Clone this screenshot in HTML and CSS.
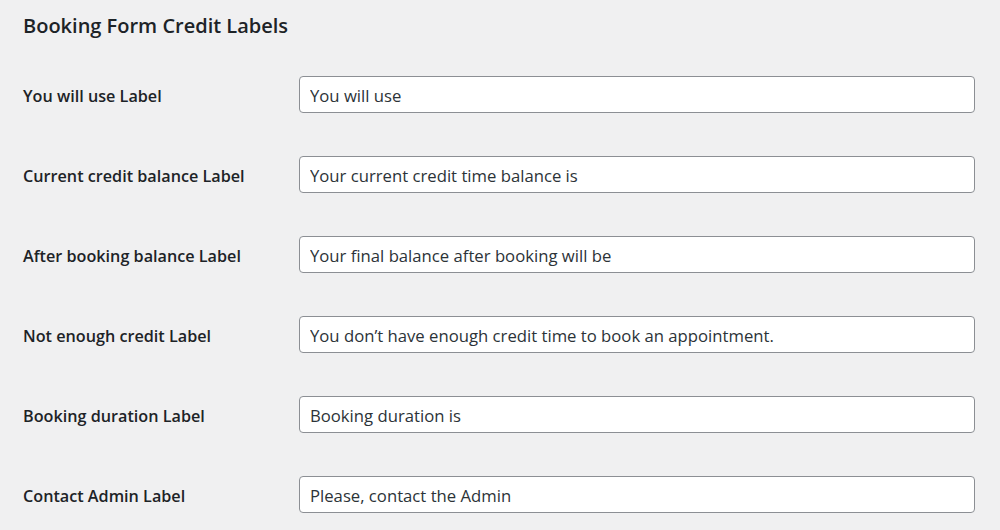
FILE: index.html
```html
<!DOCTYPE html>
<html>
<head>
<meta charset="utf-8">
<link rel="stylesheet" href="styles.css">
</head>
<body>
<div class="wrap">
  <h2 class="title">Booking Form Credit Labels</h2>
  <div class="form">
    <div class="row"><label class="lbl">You will use Label</label><input class="field" type="text" value="You will use"></div>
    <div class="row"><label class="lbl">Current credit balance Label</label><input class="field" type="text" value="Your current credit time balance is"></div>
    <div class="row"><label class="lbl">After booking balance Label</label><input class="field" type="text" value="Your final balance after booking will be"></div>
    <div class="row"><label class="lbl">Not enough credit Label</label><input class="field" type="text" value="You don’t have enough credit time to book an appointment."></div>
    <div class="row"><label class="lbl">Booking duration Label</label><input class="field" type="text" value="Booking duration is"></div>
    <div class="row"><label class="lbl">Contact Admin Label</label><input class="field" type="text" value="Please, contact the Admin"></div>
  </div>
</div>
</body>
</html>
```
FILE: styles.css
```css
html, body {
  margin: 0;
  padding: 0;
  background: #f0f0f1;
  color: #1d2327;
  font-family: "Open Sans", "Noto Sans", sans-serif;
}
.wrap {
  padding: 10px 25px 0 23px;
}
.title {
  margin: 0;
  font-size: 20px;
  font-weight: 600;
  line-height: 32px;
}
.form {
  display: flex;
  flex-direction: column;
  gap: 43px;
  margin-top: 34px;
}
.row {
  display: flex;
  align-items: center;
}
.lbl {
  width: 276px;
  flex: none;
  padding-top: 2px;
  font-size: 16.2px;
  font-weight: 600;
}
.field {
  flex: 1;
  box-sizing: border-box;
  height: 37px;
  border: 1px solid #8c8f94;
  border-radius: 4px;
  background: #fff;
  padding: 2px 10px 0;
  font-family: inherit;
  font-size: 16.7px;
  color: #2c3338;
  margin: 0;
}
```
